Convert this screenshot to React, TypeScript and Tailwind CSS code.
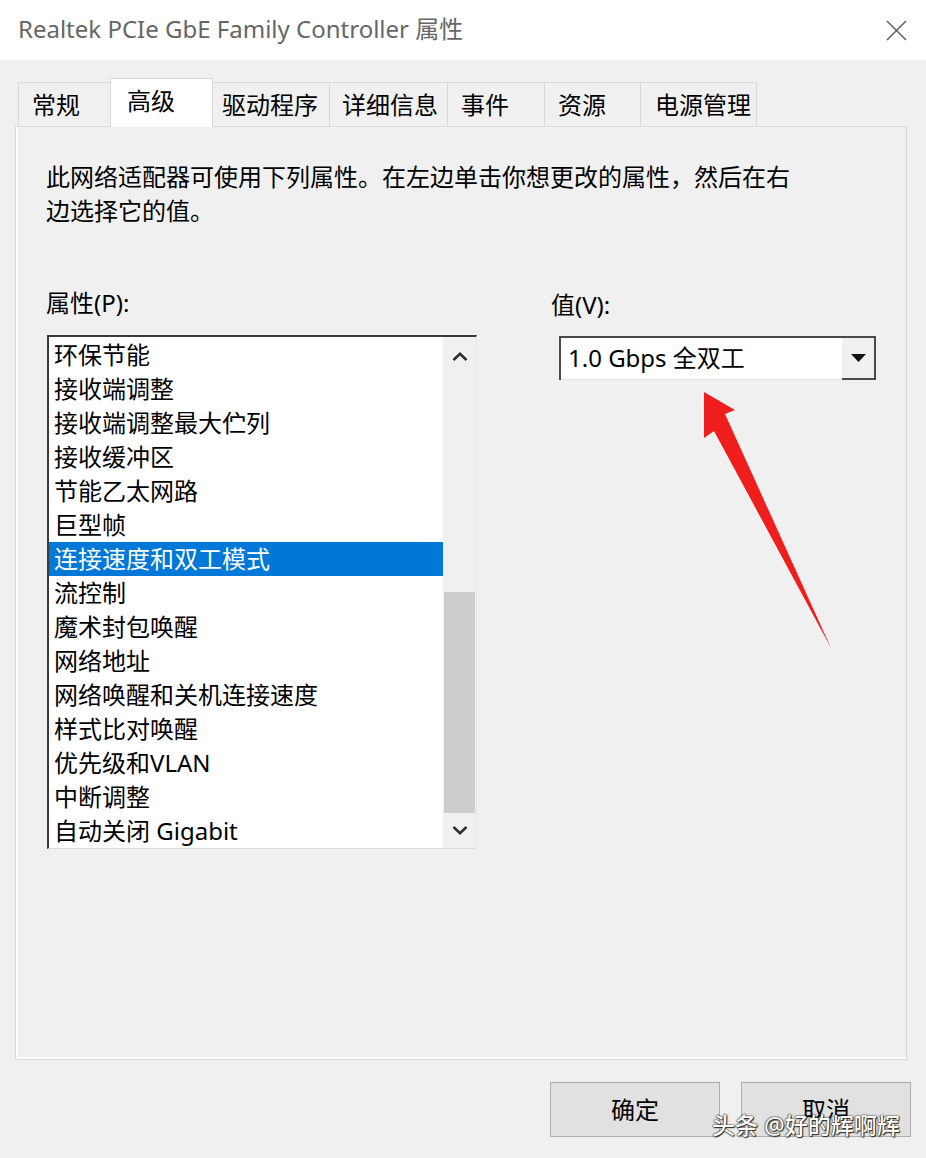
import React from 'react';

const properties = [
  '环保节能',
  '接收端调整',
  '接收端调整最大伫列',
  '接收缓冲区',
  '节能乙太网路',
  '巨型帧',
  '连接速度和双工模式',
  '流控制',
  '魔术封包唤醒',
  '网络地址',
  '网络唤醒和关机连接速度',
  '样式比对唤醒',
  '优先级和VLAN',
  '中断调整',
  '自动关闭 Gigabit',
];

const selectedIndex = 6;

const tabs = [
  { label: '常规', width: 'w-[93px]', pad: 'pl-[13px]' },
  { label: '高级', width: 'w-[103px]', pad: 'pl-[16px]' },
  { label: '驱动程序', width: 'w-[118px]', pad: 'pl-[9px]' },
  { label: '详细信息', width: 'w-[119px]', pad: 'pl-[12px]' },
  { label: '事件', width: 'w-[98px]', pad: 'pl-[13px]' },
  { label: '资源', width: 'w-[97px]', pad: 'pl-[13px]' },
  { label: '电源管理', width: 'w-[117px]', pad: 'pl-[14px]' },
];

const activeTab = 1;

const Chevron = ({ up }: { up?: boolean }) => (
  <svg width="16" height="9" viewBox="0 0 16 9">
    <path
      d={up ? 'M1.5 8 L8 1.8 L14.5 8' : 'M1.5 1 L8 7.2 L14.5 1'}
      fill="none"
      stroke="#2e2e2e"
      strokeWidth="2.6"
    />
  </svg>
);

export default function App() {
  return (
    <div className="relative w-[926px] h-[1158px] overflow-hidden bg-[#f0f0f0] text-black font-['Noto_Sans','Noto_Sans_CJK_SC',sans-serif]">
      {/* title bar */}
      <div className="h-[60px] bg-white flex items-center justify-between pl-[18px] pr-[19px]">
        <span className="text-[24px] leading-none text-[#666666] pb-[2px]">Realtek PCIe GbE Family Controller 属性</span>
        <svg width="21" height="21" viewBox="0 0 21 21" className="mt-[1px]">
          <path d="M1 1 L20 20 M20 1 L1 20" stroke="#555" strokeWidth="1.4" fill="none" />
        </svg>
      </div>

      {/* tabs */}
      <div className="relative z-10 flex items-end h-[66px] pl-[18px]">
        {tabs.map((tab, i) =>
          i === activeTab ? (
            <div
              key={tab.label}
              className={`${tab.width} ${tab.pad} -ml-px -mb-px h-[49px] bg-white border border-b-0 border-[#d9d9d9] flex items-center pb-[4px] text-[24px] leading-none`}
            >
              {tab.label}
            </div>
          ) : (
            <div
              key={tab.label}
              className={`${tab.width} ${tab.pad} ${i === 0 ? '' : '-ml-px'} h-[44px] bg-[#f0f0f0] border border-b-0 border-[#d9d9d9] flex items-center text-[24px] leading-none`}
            >
              {tab.label}
            </div>
          )
        )}
      </div>

      {/* panel */}
      <div className="mx-[15px] mr-[19px] h-[934px] border border-[#d9d9d9] bg-[#f0f0f0] shadow-[inset_2px_-2px_0_#ffffff] pt-[33px] pl-[30px]">
        <p className="text-[24px] leading-[34px]">
          此网络适配器可使用下列属性。在左边单击你想更改的属性，然后在右
          <br />
          边选择它的值。
        </p>

        <div className="flex mt-[58px]">
          {/* property list */}
          <div className="w-[431px]">
            <div className="h-[34px] text-[24px] leading-[34px]">属性(P):</div>
            <div className="ml-px mt-[15px] w-[430px] flex bg-white border-t-2 border-l-2 border-[#3a3a3a] border-r border-b border-r-[#e6e6e6] border-b-[#dcdcdc]">
              <div className="flex-1 pt-[1px]">
                {properties.map((p, i) => (
                  <div
                    key={p}
                    className={`h-[34px] pl-[5px] flex items-center text-[24px] leading-none whitespace-nowrap ${
                      i === selectedIndex ? 'bg-[#0078d7] text-white' : ''
                    }`}
                  >
                    {p}
                  </div>
                ))}
              </div>
              <div className="w-[33px] bg-[#f0f0f0] flex flex-col">
                <div className="h-[34px] flex items-center justify-center pt-[4px]">
                  <Chevron up />
                </div>
                <div className="flex-1 flex flex-col justify-end">
                  <div className="h-[221px] mx-[1px] bg-[#cdcdcd]" />
                </div>
                <div className="h-[35px] flex items-center justify-center">
                  <Chevron />
                </div>
              </div>
            </div>
          </div>

          {/* value */}
          <div className="ml-[74px] pt-[2px]">
            <div className="h-[34px] text-[24px] leading-[34px]">值(V):</div>
            <div className="ml-[8px] mt-[14px] w-[317px] h-[44px] flex border-t-2 border-l-2 border-r-2 border-[#4a4a4a]">
              <div className="flex-1 bg-white border-b border-[#e4e4e4] pl-[7px] flex items-center text-[24px] leading-none pb-[2px]">
                1.0 Gbps 全双工
              </div>
              <div className="w-[32px] bg-[#f0f0f0] border-b-2 border-[#4a4a4a] flex items-center justify-center">
                <svg width="15" height="8" viewBox="0 0 15 8">
                  <polygon points="0,0 15,0 7.5,8" fill="#111" />
                </svg>
              </div>
            </div>
          </div>
        </div>
      </div>

      {/* buttons */}
      <div className="flex justify-end gap-[21px] pr-[15px] pt-[22px]">
        <button className="w-[170px] h-[55px] bg-[#e1e1e1] border border-[#adadad] text-[24px] leading-none">确定</button>
        <button className="w-[170px] h-[55px] bg-[#e1e1e1] border border-[#adadad] text-[24px] leading-none">取消</button>
      </div>

      {/* red annotation arrow */}
      <svg className="absolute left-0 top-0 pointer-events-none" width="926" height="1158" viewBox="0 0 926 1158">
        <polygon points="704,392 735,410 725,414 831,648 714,431 704,438" fill="#f01d1d" />
      </svg>

      {/* watermark */}
      <div className="absolute left-[712px] top-[1110px] text-[23px] leading-[30px] font-medium text-white whitespace-nowrap [text-shadow:0_0_2px_#222,0_0_1px_#000,1px_1px_1px_#333]">
        头条 @好的辉啊辉
      </div>
    </div>
  );
}
